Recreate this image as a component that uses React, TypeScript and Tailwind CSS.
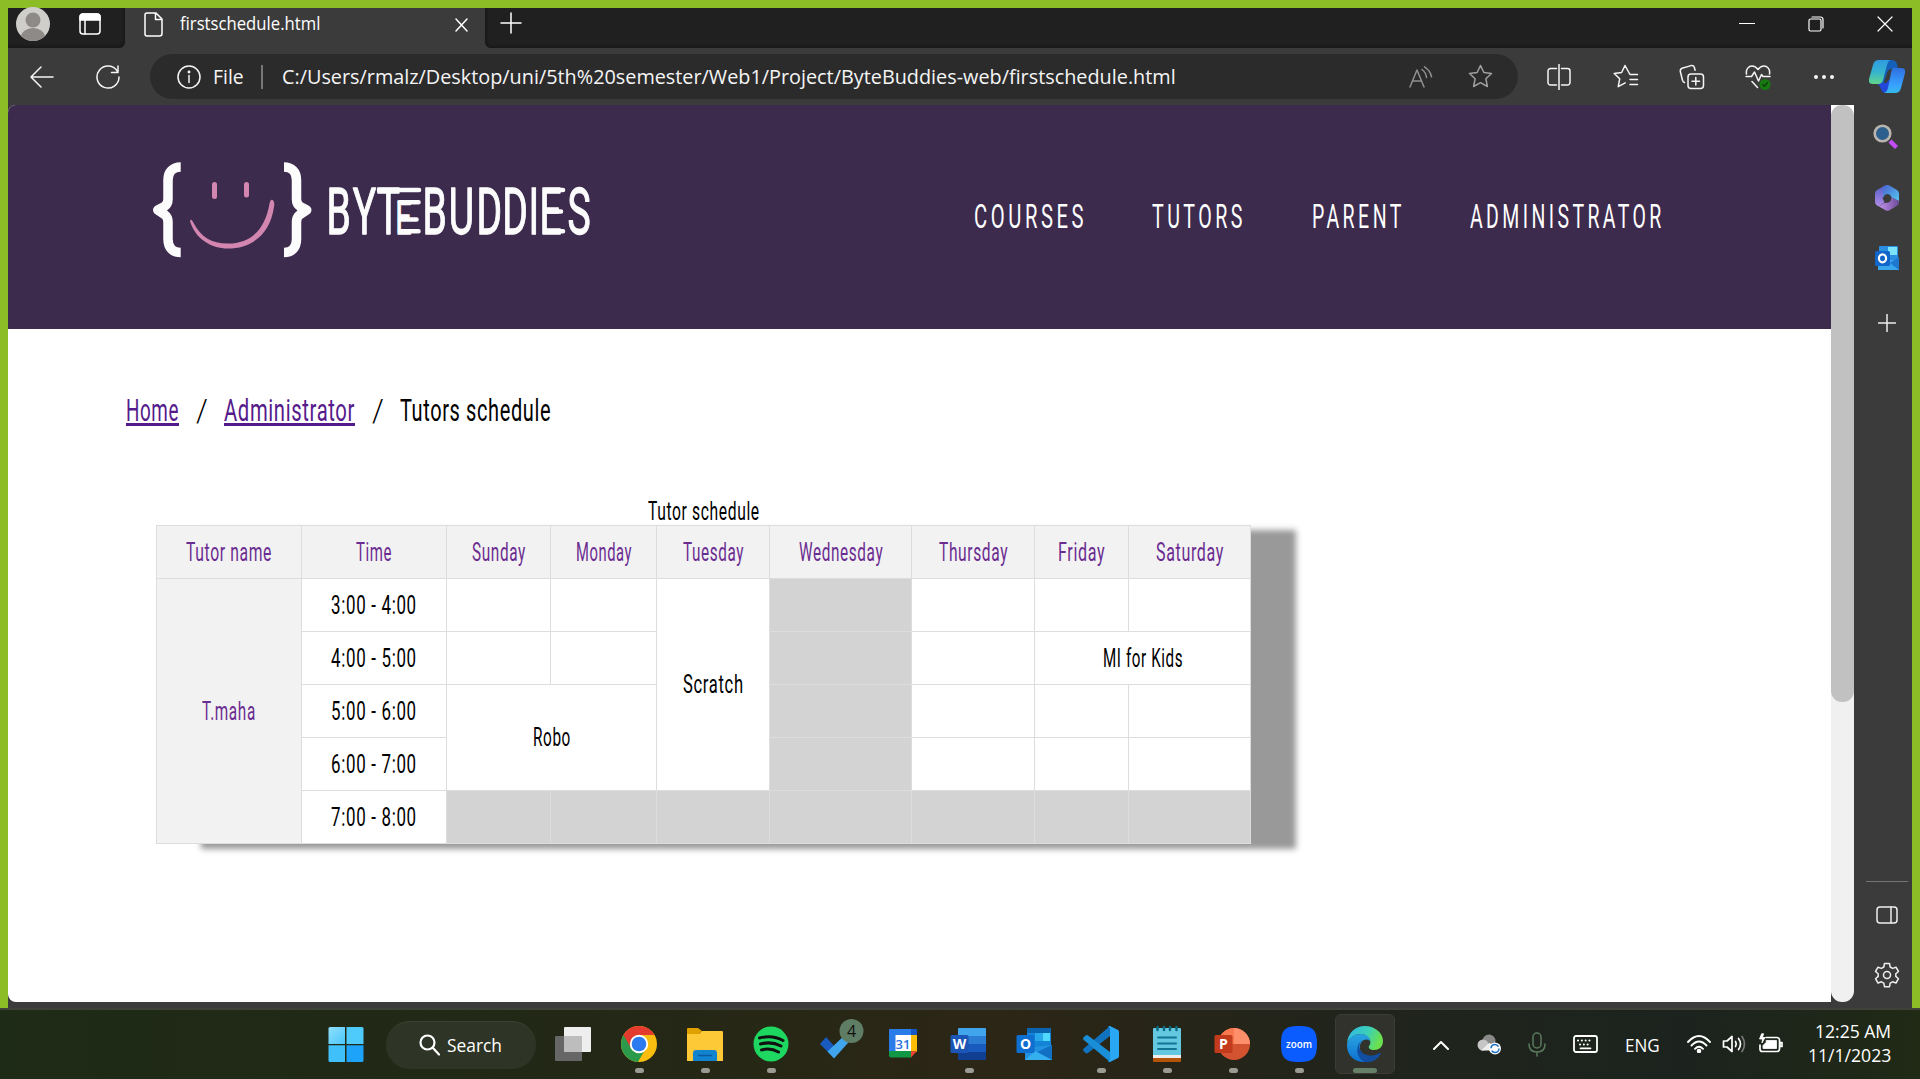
import React, { useLayoutEffect, useRef, useState } from "react";

/* Text squeezed or stretched horizontally to a given width. */
function Fit({ w, className = "", children }: { w: number; className?: string; children: string }) {
  const ref = useRef<HTMLSpanElement>(null);
  const [s, setS] = useState(1);
  useLayoutEffect(() => {
    if (ref.current) setS(w / ref.current.offsetWidth);
  }, [w, children]);
  return (
    <span className={"inline-block shrink-0 text-left whitespace-pre " + className} style={{ width: w }}>
      <span ref={ref} className="inline-block origin-left" style={{ transform: `scaleX(${s})` }}>
        {children}
      </span>
    </span>
  );
}

const UI = "font-['Open_Sans',sans-serif]";
const NARROW = "font-['Roboto',sans-serif]";

function Svg({ w, h, children, sw = 1.5, className = "" }: { w: number; h: number; children: React.ReactNode; sw?: number; className?: string }) {
  return (
    <svg width={w} height={h} viewBox={`0 0 ${w} ${h}`} fill="none" stroke="currentColor" strokeWidth={sw} strokeLinecap="round" strokeLinejoin="round" className={"shrink-0 " + className}>
      {children}
    </svg>
  );
}

function TabStrip() {
  return (
    <div className="flex h-10 bg-[#3b3b3b] text-white">
      <div className="flex w-[117px] items-center rounded-br-md bg-[#202020] pl-2 shadow-[inset_-2px_-2px_2px_#1a1a1a]">
        <svg width="34" height="34" viewBox="0 0 34 34" className="-mt-2">
          <clipPath id="av"><circle cx="17" cy="17" r="17" /></clipPath>
          <g clipPath="url(#av)">
            <rect width="34" height="34" fill="#d0cecb" />
            <circle cx="17" cy="13" r="7.5" fill="#8d8a87" />
            <ellipse cx="17" cy="30" rx="12" ry="9" fill="#8d8a87" />
          </g>
        </svg>
        <Svg w={22} h={22} className="ml-[29px] -mt-2">
          <rect x="1" y="1" width="20" height="20" rx="3" />
          <path d="M1 4a3 3 0 0 1 3-3h14a3 3 0 0 1 3 3v3H1Z" fill="currentColor" />
          <path d="M6 7v14" />
        </Svg>
      </div>
      <div className="flex w-[360px] items-center pb-2 pl-[19px]">
        <Svg w={19} h={25}>
          <path d="M3 1h9l6 6v14.5a2.500 2.500 0 0 1-2.500 2.500H3a2 2 0 0 1-2-2V3a2 2 0 0 1 2-2ZM11.500 1v6.500H18" />
        </Svg>
        <Fit w={140} className={"-mt-0.5 ml-[17px] text-[18px] leading-6 " + UI}>firstschedule.html</Fit>
        <Svg w={13} h={14} className="ml-[135px] mt-0.5"><path d="M1 1l11 12M12 1L1 13" /></Svg>
      </div>
      <div className="flex flex-1 items-start rounded-bl-md bg-[#202020] shadow-[inset_2px_-2px_2px_#1a1a1a]">
        <Svg w={22} h={22} className="ml-[15px] mt-1"><path d="M11 1v20M1 11h20" /></Svg>
        <Svg w={16} h={16} sw={1.2} className="ml-auto mt-2"><path d="M.5 7.500h15" /></Svg>
        <Svg w={16} h={16} sw={1.2} className="ml-[53px] mt-2">
          <rect x="1" y="3" width="12" height="12" rx="1.500" />
          <path d="M4 1h8.500a2.500 2.500 0 0 1 2.500 2.500V12" />
        </Svg>
        <Svg w={16} h={16} sw={1.2} className="ml-[53px] mr-[19px] mt-2"><path d="M1 1l14 14M15 1L1 15" /></Svg>
      </div>
    </div>
  );
}

function Toolbar() {
  const cell = "flex w-[66px] shrink-0 items-center justify-center";
  return (
    <div className="flex h-[57px] items-center bg-[#3b3b3b] pt-px pb-px pl-px text-[#f5f5f5]">
      <div className={cell}><Svg w={24} h={22}><path d="M23 11H1M11 1L1 11l10 10" /></Svg></div>
      <div className={cell}><Svg w={26} h={26}><path d="M22.500 7.500A11 11 0 1 0 24 13M23 2v6.500h-6.500" /></Svg></div>
      <div className="ml-[9px] flex h-[45px] w-[1368px] shrink-0 items-center rounded-full bg-[#2b2b2b] pl-[27px]">
        <Svg w={24} h={24}><circle cx="12" cy="12" r="11" /><path d="M12 10.500v7" /><circle cx="12" cy="7" r=".7" fill="currentColor" /></Svg>
        <Fit w={31} className={"ml-[12px] text-[20px] leading-6 " + UI}>File</Fit>
        <div className="ml-[17px] h-6 w-[1.500px] bg-[#777]" />
        <Fit w={894} className={"ml-[19px] text-[20px] leading-6 " + UI}>C:/Users/rmalz/Desktop/uni/5th%20semester/Web1/Project/ByteBuddies-web/firstschedule.html</Fit>
        <Svg w={24} h={22} className="ml-[233px] text-[#909090]">
          <path d="M1 21L8 4l7 17M3.500 15h9M13 3.500q4 3 4.500 8M15.500 .8q6 4 7 10" />
        </Svg>
        <Svg w={25} h={25} className="ml-[35px] text-[#a0a0a0]"><path d="M12.500 1.500l3.400 7 7.600 1-5.600 5.300 1.500 7.700-6.900-3.800-6.900 3.800 1.500-7.700L1.500 9.500l7.600-1Z" /></Svg>
      </div>
      <div className="w-[8px] shrink-0" />
      <div className={cell}><Svg w={24} h={26}><path d="M12 .5v25M9.500 4.500H3.500A2.500 2.500 0 0 0 1 7v11.500A2.500 2.500 0 0 0 3.500 21h6M14.500 4.500h6A2.500 2.500 0 0 1 23 7v11.500a2.500 2.500 0 0 1-2.500 2.500h-6" /></Svg></div>
      <div className={cell + " pl-0.5"}><Svg w={26} h={25}><path d="M24.500 10.500H17L12 1.500l-3.400 7-7.400 1 5.500 5.300-1.500 7.900 7-3.800M17 15.500h7.500M17 20.500h7.500" /></Svg></div>
      <div className={cell + " pl-0.5"}><Svg w={26} h={26}><rect x="9" y="10" width="15.500" height="14.500" rx="3" /><path d="M16.800 13.500v7.500M13 17.300h7.500M5.500 18.500q-1.500-.5-2-2.300L1.300 7.500Q1 5 3 4.200L12 1.600q2.600-.5 3.300 1.700l.8 3" /></Svg></div>
      <div className={cell + " pl-0.5"}>
        <Svg w={26} h={26}>
          <path d="M1.500 10C.5 5 4 2 7 2q3.500 0 6 3.500Q15.500 2 19 2c3 0 6.500 3 5.500 8M1 12.500h5.500L9.500 8l4 9 3-6.500 1.500 2h7M7 17.500l5.500 6" />
          <circle cx="20" cy="20.500" r="5.500" fill="#177a10" stroke="none" />
          <path d="M17.800 20.800l1.500 1.300 3-3.200" stroke="#0b3d08" />
        </Svg>
      </div>
      <div className={cell + " pl-0.5"}><Svg w={22} h={6}><g fill="currentColor" stroke="none"><circle cx="3" cy="3" r="2" /><circle cx="11" cy="3" r="2" /><circle cx="19" cy="3" r="2" /></g></Svg></div>
      <div className="flex w-[60px] shrink-0 justify-center pl-px">
        <svg width="36" height="33" viewBox="0 0 36 33">
          <defs>
            <linearGradient id="c1" x1="0" y1="0" x2="0" y2="1"><stop offset="0" stopColor="#2f9be0" /><stop offset=".5" stopColor="#35b3d0" /><stop offset="1" stopColor="#62d58a" /></linearGradient>
            <linearGradient id="c2" x1="0" y1="0" x2="0" y2="1"><stop offset="0" stopColor="#2f6fe0" /><stop offset=".7" stopColor="#38a3ff" /><stop offset="1" stopColor="#36b9e8" /></linearGradient>
          </defs>
          <path d="M14 0h8q5 0 6 4l1 5h-6q-4 0-5 4l-4 12H9z" fill="#1560b8" />
          <path d="M9 23h8l4-4v14h-4q-4 0-5-4z" fill="#2347d8" />
          <path d="M10 0h11q-2 1-3 5l-4 15q-1 4-5 4H4q-5 0-4-5L4 5Q5 0 10 0Z" fill="url(#c1)" />
          <path d="M24 8h8q5 0 4 5l-4 15q-1 5-6 5H15q3-1 4-5l3-15q0-3 2-5Z" fill="url(#c2)" />
        </svg>
      </div>
    </div>
  );
}

function Logo() {
  return (
    <svg width="450" height="110" viewBox="150 155 450 110" className="shrink-0">
      <g fill="none" stroke="#fcfcfc" strokeWidth="9.500" strokeLinejoin="round">
        <path d="M180.700 167C173 167 168 171.500 168 180V199Q168 204 164.500 206.500L157.800 210L164.500 214.500Q168 217 168 222V239C168 248 173 252.500 180.700 252.500" />
        <path d="M284 167C291.500 167 296.500 171.500 296.500 180V199Q296.500 204 300 206.500L306.700 210L300 214.500Q296.500 217 296.500 222V239C296.500 248 291.500 252.500 284 252.500" />
      </g>
      <g fill="#d286b0">
        <rect x="212" y="182" width="5" height="17" rx="2.500" />
        <rect x="244" y="182" width="5" height="15.500" rx="2.500" />
        <path d="M190 221q1-3 3 1c8 15 18 21.500 35 21.500 22 0 37-13 41.500-40q1-5 3.200-3.500 2.300 1.500 1.300 7C270 235 251 248.500 228 248.500c-17 0-33-10-38-27.500Z" />
      </g>
      <text transform="translate(0 233.500) scale(.6 1)" fill="#fcfcfc" stroke="#fcfcfc" strokeWidth="1.300" strokeLinejoin="round" fontFamily="Roboto, sans-serif" fontSize="65" x="544 588 628">
        BYT<tspan fontSize="47" x="659">E</tspan><tspan x="704 748 794 837 881 899 946">BUDDIES</tspan>
      </text>
      <path d="M379 190h40M400 202.300h18.500M400 219.500h16.500M400 231.300h18.500M547 190h16M547 211.500h14M547 231.300h16" stroke="#fcfcfc" strokeWidth="4.600" strokeLinecap="round" />
    </svg>
  );
}

const th = "border border-[#ddd] bg-[#f2f2f2] p-0 pt-px text-center font-normal text-[#6b2c91]";
const td = "h-[53px] border border-[#ddd] p-0 pt-px text-center";
const gr = td + " bg-[#d3d3d3]";
const days: [string, number][] = [["Tutor name", 86], ["Time", 36], ["Sunday", 54], ["Monday", 56], ["Tuesday", 61], ["Wednesday", 84], ["Thursday", 69], ["Friday", 47], ["Saturday", 68]];
const widths = [145, 145, 104, 106, 113, 142, 123, 94, 122];

function Schedule() {
  const time = (t: string) => <td className={td}><Fit w={86}>{t}</Fit></td>;
  return (
    <div className={"ml-[148px] w-[1095px] text-[25px] leading-[28px] tracking-[1px] text-black " + NARROW}>
      <div className="flex h-[31px] justify-center pt-1"><Fit w={112}>Tutor schedule</Fit></div>
      <div className="shadow-[45px_5px_6px_#999]">
        <table className="w-[1095px] table-fixed border-collapse bg-white">
          <colgroup>{widths.map((w, i) => <col key={i} style={{ width: w }} />)}</colgroup>
          <tbody>
            <tr>{days.map(([d, w]) => <th key={d} className={th + " h-[53px]"}><Fit w={w}>{d}</Fit></th>)}</tr>
            <tr>
              <th rowSpan={5} className={th}><Fit w={54}>T.maha</Fit></th>
              {time("3:00 - 4:00")}
              <td className={td} /><td className={td} />
              <td rowSpan={4} className={td}><Fit w={61}>Scratch</Fit></td>
              <td className={gr} /><td className={td} /><td className={td} /><td className={td} />
            </tr>
            <tr>
              {time("4:00 - 5:00")}
              <td className={td} /><td className={td} /><td className={gr} /><td className={td} />
              <td colSpan={2} className={td}><Fit w={80}>MI for Kids</Fit></td>
            </tr>
            <tr>
              {time("5:00 - 6:00")}
              <td colSpan={2} rowSpan={2} className={td}><Fit w={38}>Robo</Fit></td>
              <td className={gr} /><td className={td} /><td className={td} /><td className={td} />
            </tr>
            <tr>{time("6:00 - 7:00")}<td className={gr} /><td className={td} /><td className={td} /><td className={td} /></tr>
            <tr>{time("7:00 - 8:00")}{[0, 1, 2, 3, 4, 5, 6].map((i) => <td key={i} className={gr} />)}</tr>
          </tbody>
        </table>
      </div>
    </div>
  );
}

function Page() {
  return (
    <div className="h-[897px] w-[1823px] shrink-0 overflow-hidden rounded-tl-lg rounded-bl-lg bg-white">
      <header className={"flex h-[224px] bg-[#3d2b4e] pl-[142px] text-[34px] leading-[40px] text-white " + NARROW}>
        <div className="pt-[50px]"><Logo /></div>
        <nav className="flex pt-[91px] pl-[374px] tracking-[6px]">
          <Fit w={113}>COURSES</Fit>
          <Fit w={94} className="ml-[65px]">TUTORS</Fit>
          <Fit w={93} className="ml-[66px]">PARENT</Fit>
          <Fit w={195} className="ml-[65px]">ADMINISTRATOR</Fit>
        </nav>
      </header>
      <div className={"flex h-[165px] pt-[61px] pl-[118px] text-[32px] leading-[40px] tracking-[1px] text-black " + NARROW}>
        <a className="h-9 border-b-[3px] border-[#551a8b] text-[#551a8b]"><Fit w={53}>Home</Fit></a>
        <Fit w={13} className="ml-[17px] font-light">/</Fit>
        <a className="ml-[15px] h-9 border-b-[3px] border-[#551a8b] text-[#551a8b]"><Fit w={131}>Administrator</Fit></a>
        <Fit w={13} className="ml-[17px] font-light">/</Fit>
        <Fit w={151} className="ml-[15px]">Tutors schedule</Fit>
      </div>
      <Schedule />
    </div>
  );
}

function OutlookSide() {
  return (
    <svg width="24" height="24" viewBox="0 0 24 24">
      <rect x="4" width="19" height="22" rx="1" fill="#2a8fe0" /><rect x="13" y="1" width="9" height="8" fill="#7be3fb" />
      <path d="M3 14h21v10H3z" fill="#38a5ec" /><path d="M24 11v13L15 17z" fill="#1e78cf" />
      <rect y="5" width="15" height="15" rx="1.500" fill="#1266c9" /><ellipse cx="7.500" cy="12.300" rx="3.600" ry="4" fill="none" stroke="#fff" strokeWidth="2.200" />
    </svg>
  );
}

function Sidebar() {
  return (
    <aside className="flex h-[903px] w-[58px] flex-col items-center bg-[#3b3b3b] pl-2 text-[#eee]">
      <svg width="26" height="26" viewBox="0 0 26 26" className="mt-[19px] mr-0.5">
        <path d="M17 17l6.500 6.500" stroke="#c24cf5" strokeWidth="4.500" /><circle cx="9.500" cy="9.500" r="7.800" fill="#2d5f8e" stroke="#b9b5ae" strokeWidth="2.600" />
      </svg>
      <svg width="26" height="26" viewBox="0 0 26 26" className="mt-[35px]">
        <defs>
          <linearGradient id="m1" x1="0" y1="0" x2="1" y2="1"><stop stopColor="#4a62cf" /><stop offset="1" stopColor="#55c8f2" /></linearGradient>
          <linearGradient id="m2" x1="0" y1="0" x2="1" y2="0"><stop stopColor="#c493ec" /><stop offset="1" stopColor="#6b4a98" /></linearGradient>
          <linearGradient id="m3" x1="0" y1="0" x2="0" y2="1"><stop stopColor="#5560c8" /><stop offset="1" stopColor="#b08be6" /></linearGradient>
        </defs>
        <path d="M10 1v9l-1.500 3 2 4.500L5 21.500 3 20.500Q1 19.500 1 17V8.500Q1 6 3 5z" fill="url(#m3)" />
        <path d="M9 1.500l2.500-1.200q2-.8 4 .2L23 5q2 1.200 2 3.500V16l-7.500-3.500q-1-3.500-4-3.500-3 0-4.500 4z" fill="url(#m1)" />
        <path d="M5 21.500L10.500 18l3-.3q3.500-.5 4-5.200L25 16v1.500q0 2-2 3.200l-7.500 4.500q-2 1-4 0z" fill="url(#m2)" />
      </svg>
      <div className="mt-[35px]"><OutlookSide /></div>
      <Svg w={18} h={18} className="mt-[44px]"><path d="M9 .5v17M.5 9h17" /></Svg>
      <div className="mt-auto h-px w-[42px] bg-[#757575]" />
      <Svg w={22} h={18} className="mt-[24px]"><rect x="1" y="1" width="20" height="16" rx="3" /><path d="M15 1v16" /></Svg>
      <Svg w={26} h={26} className="mt-[38px] mb-5">
        <circle cx="13" cy="13" r="3.500" />
        <path d="M10.500 1.500h5l.7 3.500 2.400 1.400 3.400-1.200 2.500 4.300-2.700 2.300v2.600l2.700 2.300-2.500 4.300-3.400-1.200-2.400 1.400-.7 3.500h-5l-.7-3.500-2.400-1.400-3.400 1.200L1.500 16.700l2.700-2.300v-2.600L1.500 9.500 4 5.200l3.400 1.200L9.800 5Z" />
      </Svg>
    </aside>
  );
}

function TaskApp({ children, dot = false, active = false }: { children: React.ReactNode; dot?: boolean; active?: boolean }) {
  return (
    <div className="relative flex h-[69px] w-[66px] shrink-0 items-center justify-center">
      {active && <div className="absolute top-1 left-[3px] h-[60px] w-[60px] rounded-md border border-[#3a3c35] bg-[#30322b]" />}
      <svg width="40" height="40" viewBox="0 0 40 40" className="relative -mt-0.5 overflow-visible">{children}</svg>
      {dot && <div className="absolute bottom-[6px] h-[5px] w-[9px] rounded-full bg-[#9b9b93]" />}
      {active && <div className="absolute bottom-[6px] h-[5px] w-6 rounded-full bg-[#668067]" />}
    </div>
  );
}

function Letter({ c, x = 2, fill }: { c: string; x?: number; fill: string }) {
  return (
    <g>
      <rect x={x} y="11" width="18" height="18" rx="1.500" fill={fill} />
      <text x={x + 9} y="25" textAnchor="middle" fill="#fff" fontFamily="Open Sans, sans-serif" fontWeight="700" fontSize="14">{c}</text>
    </g>
  );
}

function Taskbar() {
  return (
    <footer className="flex h-[71px] items-center border-t-2 border-[#3f4239] bg-[linear-gradient(90deg,#1e2b16_0%,#232816_30%,#2c2616_52%,#20241c_72%,#1c231e_88%,#202a15_100%)] pl-[313px] text-white">
      <TaskApp>
        <defs><linearGradient id="w" x1="0" y1="0" x2="1" y2="1"><stop stopColor="#8fe0fc" /><stop offset="1" stopColor="#4cc6fb" /></linearGradient></defs>
        <path d="M4 3h15v17H2.500V4.500Q2.500 3 4 3Z" fill="url(#w)" /><path d="M20.500 3H36q1.500 0 1.500 1.500V20h-17z" fill="#4fcbfb" />
        <path d="M2.500 21.300H19V38H4q-1.500 0-1.500-1.500z" fill="#3fc0fb" /><path d="M20.500 21.300h17v15.200q0 1.500-1.500 1.500H20.500z" fill="#1da3fa" />
      </TaskApp>
      <div className="ml-[7px] mr-1 flex h-12 w-[150px] items-center rounded-full border-t border-[#3a4232] bg-[#2f3526] pl-[33px]">
        <Svg w={21} h={22} sw={2.2}><circle cx="8.500" cy="8.500" r="7" /><path d="M14 14l6 6.500" /></Svg>
        <Fit w={55} className={"ml-[7px] text-[18px] leading-6 " + UI}>Search</Fit>
      </div>
      <TaskApp>
        <rect x="2" y="12" width="27" height="25" rx="1" fill="#666" /><rect x="11" y="3" width="27" height="25" rx="1" fill="#eee" /><rect x="11" y="12" width="18" height="16" fill="#bdbdbd" />
      </TaskApp>
      <TaskApp dot>
        <circle cx="20" cy="20" r="18" fill="#f9bd10" />
        <path d="M20 20L4.400 11A18 18 0 0 0 19 38l8-14z" fill="#2b9a4a" />
        <path d="M20 20L12 24 4.400 11A18 18 0 0 1 35.600 11H20z" fill="#e33b2e" />
        <circle cx="20" cy="20" r="9.200" fill="#fff" /><circle cx="20" cy="20" r="7.300" fill="#2b7af0" />
      </TaskApp>
      <TaskApp dot>
        <path d="M2 5q0-1 1-1h10l4 3-4 4H2z" fill="#e0a100" /><path d="M2 10h12l3-3h20q1 0 1 1v29H2z" fill="#fdc936" />
        <path d="M8 37v-8q0-3 3-3h18q3 0 3 3v8z" fill="#1283cf" /><path d="M13 31.500h14" stroke="#0a5ba0" strokeWidth="1.500" />
      </TaskApp>
      <TaskApp dot>
        <circle cx="20" cy="20" r="17.500" fill="#1ed760" />
        <path d="M8.500 14q13-3.500 23.500 2.500M9.500 20q11-3 20.500 2M10.500 26q9-2.500 17 2" fill="none" stroke="#111" strokeWidth="3" strokeLinecap="round" />
      </TaskApp>
      <TaskApp>
        <path d="M3 20l6-7 10 11-6 6z" fill="#185abd" /><path d="M10.500 27.500L30 9l5 5.500L17 34.500z" fill="#41a5ee" />
        <circle cx="34.500" cy="7" r="12" fill="#5f7d64" /><text x="34.500" y="13" textAnchor="middle" fill="#111" fontFamily="Open Sans, sans-serif" fontSize="16">4</text>
      </TaskApp>
      <TaskApp>
        <path d="M6 6q0-1 1-1h21v6H13v17H6z" fill="#2a7de9" /><path d="M28 5h5q1 0 1 1v5h-6z" fill="#1557c5" /><path d="M28 11h6v17h-6z" fill="#fbbc04" />
        <path d="M6 27h22v6.500H8q-2 0-2-2z" fill="#109844" /><path d="M28 27h6l-6 6.500z" fill="#ea4335" /><rect x="12.500" y="11" width="15.500" height="16" fill="#fff" />
        <text x="20" y="24.500" textAnchor="middle" fill="#2a72dc" fontFamily="Open Sans, sans-serif" fontSize="13" fontWeight="600">31</text>
      </TaskApp>
      <TaskApp dot>
        <path d="M9 5q0-1 1-1h26q1 0 1 1v7H9z" fill="#41a5ee" /><path d="M9 12h28v8H9z" fill="#2b7cd3" /><path d="M9 20h28v8H9z" fill="#185abd" /><path d="M9 28h28v7q0 1-1 1H10q-1 0-1-1z" fill="#103f91" />
        <Letter c="W" x={1.5} fill="#1b55b5" />
      </TaskApp>
      <TaskApp>
        <rect x="12" y="4" width="24" height="26" fill="#1484d6" /><path d="M12 4h24v5H12z" fill="#0a64b0" /><path d="M20 9h8v8h-8z" fill="#28a8ea" /><path d="M28 9h7v8h-7z" fill="#50d9ff" />
        <path d="M10 24l27-3v15H10z" fill="#2191e0" /><path d="M37 21v15L22 28z" fill="#1170c4" /><path d="M10 36h27L20 27z" fill="#35b0ee" />
        <Letter c="O" x={1.5} fill="#0f6fd0" />
      </TaskApp>
      <TaskApp dot>
        <path d="M29 2v10L7 29q-1.500 1-2.700-.2L2.500 27q-1-1 0-2.200z" fill="#1173c0" />
        <path d="M29 38V28L7 11.500q-1.500-1-2.700 .2L2.500 13.500q-1 1 0 2.200z" fill="#1a8fd8" />
        <path d="M29 2l8 4q1 .7 1 2v24q0 1.300-1 2l-8 4q-1.500 0-2-1l2-1V4l-2-1q.5-1 2-1z" fill="#29a7f2" />
      </TaskApp>
      <TaskApp dot>
        <rect x="6" y="4" width="28" height="29" rx="1" fill="#63c8e0" /><path d="M6 31h28v3H6z" fill="#eee" /><path d="M6 34h28v3q0 1-1 1H7q-1 0-1-1z" fill="#b35408" />
        <path d="M11 13.500h18M11 19.500h18M11 25h18" stroke="#107493" strokeWidth="2" strokeLinecap="round" />
        <path d="M10.500 3v3M17 3v3M23 3v3M29.500 3v3" stroke="#0c6b80" strokeWidth="2.500" strokeLinecap="round" />
      </TaskApp>
      <TaskApp dot>
        <circle cx="21" cy="20" r="16" fill="#d35230" /><path d="M21 4a16 16 0 0 1 16 16H21z" fill="#ff8f6b" /><path d="M21 4a16 16 0 0 0-16 16h16z" fill="#f77950" />
        <Letter c="P" x={1.5} fill="#c33b1d" />
      </TaskApp>
      <TaskApp dot>
        <path d="M20 2c14 0 18 4 18 18s-4 18-18 18S2 34 2 20 6 2 20 2Z" fill="#0b5cff" />
        <text x="20" y="23.500" textAnchor="middle" textLength="26" lengthAdjust="spacingAndGlyphs" fill="#fff" fontFamily="Open Sans, sans-serif" fontWeight="600" fontSize="11">zoom</text>
      </TaskApp>
      <TaskApp active>
        <defs>
          <linearGradient id="e1" x1="0" y1="0" x2="1" y2=".3"><stop stopColor="#2fb5e8" /><stop offset=".6" stopColor="#3bd0b8" /><stop offset="1" stopColor="#6be04e" /></linearGradient>
          <linearGradient id="e2" x1="0" y1="0" x2="0" y2="1"><stop stopColor="#2aa5e0" /><stop offset="1" stopColor="#0c6fd0" /></linearGradient>
        </defs>
        <path d="M2 19C3 9 10 2 20 2c10 0 18 7 18 15 0 6-4 9-9 9-4 0-6-2-5-4 2-2 2-6-1-9-5-5-16-4-21 6Z" fill="url(#e1)" />
        <path d="M2 20C4 13 10 10 16 10c5 0 9 3 9 7-5-4-11 1-10 8 1 8 7 11 11 12C13 41 1 33 2 20Z" fill="url(#e2)" />
        <path d="M17 16c-5 5-3 13 5 15 5 1.500 9 0 13-2 1 0 1 .5 .5 1.500C32 36 26 39 20 38 12 35 9 23 17 16Z" fill="#124e9f" />
      </TaskApp>
      <div className="ml-[19px] flex items-center">
        <div className="flex w-12 justify-center"><Svg w={18} h={10} sw={2}><path d="M2 9l7-7 7 7" /></Svg></div>
        <div className="flex w-12 justify-center">
          <svg width="24" height="21" viewBox="0 0 24 21"><circle cx="12" cy="7" r="6.500" fill="#8a8a88" /><circle cx="6" cy="11" r="5.500" fill="#c5c5c5" /><path d="M4 16.500L12 9l8 3v4.500z" fill="#eee" /><circle cx="18" cy="14.500" r="6" fill="#fff" /><circle cx="18" cy="14.500" r="4" fill="none" stroke="#1c72c4" strokeWidth="1.600" strokeDasharray="10 2.500" /></svg>
        </div>
        <div className="flex w-12 justify-center"><Svg w={18} h={25} className="text-[#5a7a5c]"><rect x="5" y="1" width="8" height="15" rx="4" /><path d="M1 12q0 8 8 8t8-8M9 20v4" /></Svg></div>
        <div className="flex w-12 justify-center"><Svg w={25} h={18} sw={1.8} className="-mt-0.5"><rect x="1" y="1" width="23" height="16" rx="2" /><path d="M5 5.500h15M7 9.500h11" strokeDasharray=".1 3.700" strokeWidth="2" /><path d="M7.500 13.300h10" /></Svg></div>
        <div className="flex w-[66px] justify-center"><Fit w={35} className={"text-[18px] leading-6 " + UI}>ENG</Fit></div>
        <div className="ml-1.5 flex w-9 justify-center"><Svg w={24} h={18} sw={1.9} className="-mt-0.5"><path d="M1 7q11-12 22 0M4.500 10.500q7.500-8 15 0M8 13.800q4-4 8 0" /><circle cx="12" cy="16" r="1.300" fill="currentColor" /></Svg></div>
        <div className="flex w-9 justify-center"><Svg w={25} h={20} sw={1.7} className="-mt-0.5 -ml-0.5"><path d="M1.500 7h3.500l5-4.500v15L5 13H1.500ZM13.500 7.500q1.500 2.500 0 5M16.500 4.500q4 5.500 0 11" /><path d="M20 2.500q5 7.500 0 15" stroke="#777" /></Svg></div>
        <div className="flex w-9 justify-center"><Svg w={25} h={20} sw={1.7} className="-mt-1 -ml-0.5"><path d="M8 4.500h11a2.500 2.500 0 0 1 2.500 2.500v9a2.500 2.500 0 0 1-2.500 2.500H4.500A2.500 2.500 0 0 1 2 16v-4M22 9.500h2v4h-2z" /><path d="M8.500 7.500h10v8H5v-3l3-3zM3.500 1L1.500 6h3L4 10 7 4.500H4.500L5.500 1z" fill="currentColor" strokeWidth=".8" /></Svg></div>
      </div>
      <div className={"mr-[29px] mb-[4px] ml-auto flex flex-col items-end text-[18px] leading-6 " + UI}>
        <Fit w={76}>12:25 AM</Fit>
        <Fit w={83}>11/1/2023</Fit>
      </div>
    </footer>
  );
}

export default function App() {
  return (
    <div className="h-[1079px] w-[1920px] overflow-hidden">
      <div className="h-[1008px] bg-[#8cbd26] px-2 pt-2">
        <TabStrip />
        <Toolbar />
        <div className="flex h-[903px] bg-[#3b3b3b]">
          <Page />
          <div className="h-[897px] w-[23px] shrink-0 rounded-b-[11px] bg-[#f0f0f0]">
            <div className="bg-[linear-gradient(#fff_50%,#f0f0f0_50%)]"><div className="h-[597px] rounded-[11px] bg-[#c1c1c1]" /></div>
          </div>
          <Sidebar />
        </div>
      </div>
      <Taskbar />
    </div>
  );
}
